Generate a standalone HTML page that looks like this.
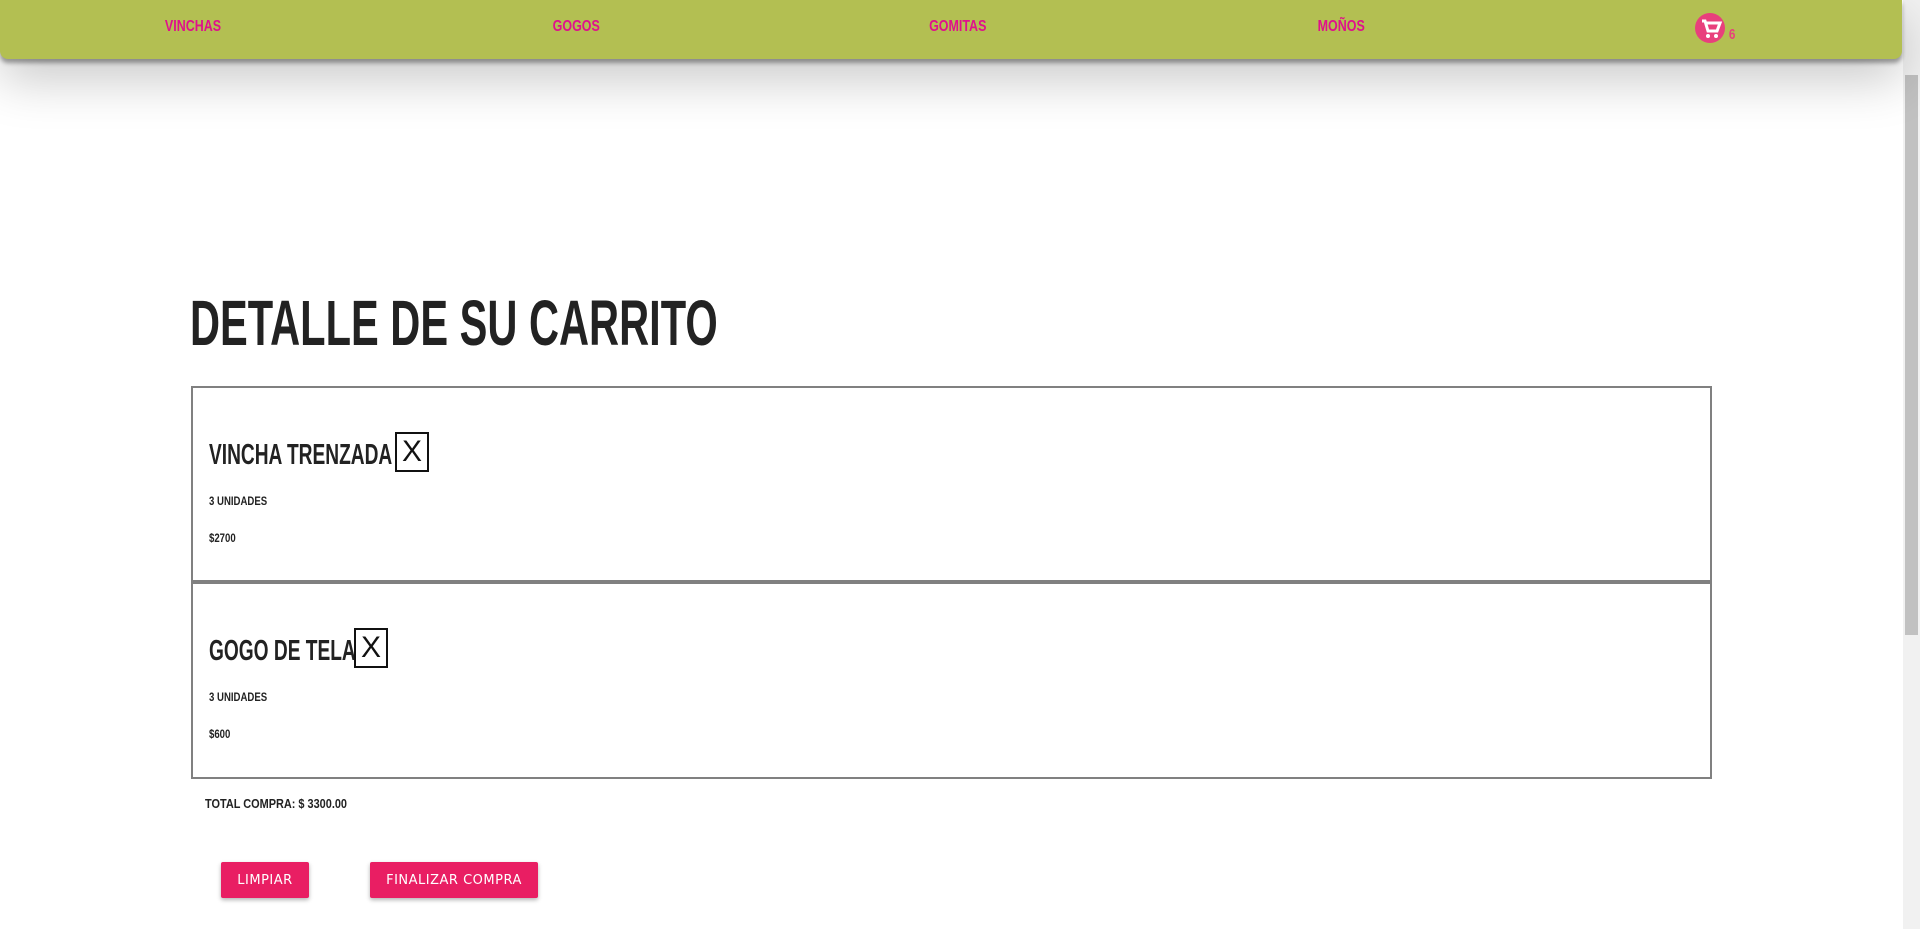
<!DOCTYPE html>
<html><head><meta charset="utf-8"><style>
body{margin:0;width:1920px;height:929px;overflow:hidden;background:#fff;font-family:"Liberation Sans",sans-serif;position:relative}
.nav{position:absolute;left:0;top:0;width:1902px;height:59px;background:#b3bf52;border-radius:0 0 8px 8px;box-shadow:0 4px 4px rgba(0,0,0,.35),0 20px 50px rgba(0,0,0,.22);z-index:2}
.nav div{position:absolute;top:0;width:200px;height:54px;display:flex;align-items:center;justify-content:center;color:#e0108c;font-weight:bold;font-size:16px}
.nav span{display:inline-block;transform:scaleX(.78)}
.cond{display:inline-block;transform-origin:left center;white-space:nowrap;font-weight:bold;color:#222}
.box{position:absolute;left:191px;width:1517px;border:2px solid #808080;height:192px}
.t{position:absolute;left:16px;font-size:29px}
.x{position:absolute;border:2px solid #111;font-family:"Liberation Sans",sans-serif;font-weight:normal;font-size:30px;display:flex;align-items:center;justify-content:center;color:#111;box-sizing:border-box}
.s{position:absolute;left:16px;font-size:12px}
.btn{position:absolute;top:862px;height:36px;background:#e91e63;color:#fff;letter-spacing:.5px;display:flex;align-items:center;justify-content:center;border-radius:2px;box-shadow:0 2px 4px rgba(0,0,0,.3);font-family:"DejaVu Sans",sans-serif;font-size:13px}
.sb{position:absolute;right:0;top:0;width:17px;height:929px;background:#f1f1f1}
.th{position:absolute;right:2px;top:75px;width:13px;height:560px;background:#c1c1c1}
</style></head><body>
<div class="nav">
<div style="left:93px"><span>VINCHAS</span></div>
<div style="left:476px"><span>GOGOS</span></div>
<div style="left:858px"><span>GOMITAS</span></div>
<div style="left:1241px"><span>MOÑOS</span></div>
<div style="left:1615px"><svg width="34" height="34" viewBox="0 0 34 34" style="margin-top:4px"><ellipse cx="16" cy="16" rx="15" ry="15" fill="#e8407c"/><path d="M8 9h3l3 10h9l3-8H12" fill="none" stroke="#fff" stroke-width="3"/><circle cx="14" cy="24" r="2" fill="#fff"/><circle cx="22" cy="24" r="2" fill="#fff"/></svg><span style="color:#e8407c;font-size:15px;margin-top:14px">6</span></div>
</div>
<div class="cond" style="position:absolute;left:190px;top:286px;font-size:64px;transform:scaleX(.65)">DETALLE DE SU CARRITO</div>
<div class="box" style="top:386px">
<div class="cond t" style="top:51px;transform:scaleX(.66)">VINCHA TRENZADA</div>
<div class="x" style="left:202px;top:44px;width:34px;height:40px">X</div>
<div class="cond s" style="top:106px;transform:scaleX(.8)">3 UNIDADES</div>
<div class="cond s" style="top:143px;transform:scaleX(.8)">$2700</div>
</div>
<div class="box" style="top:582px;height:193px">
<div class="cond t" style="top:51px;transform:scaleX(.66)">GOGO DE TELA</div>
<div class="x" style="left:161px;top:44px;width:34px;height:40px">X</div>
<div class="cond s" style="top:106px;transform:scaleX(.8)">3 UNIDADES</div>
<div class="cond s" style="top:143px;transform:scaleX(.8)">$600</div>
</div>
<div class="cond" style="position:absolute;left:205px;top:796px;font-size:13px;transform:scaleX(.84)">TOTAL COMPRA: $ 3300.00</div>
<div class="btn" style="left:221px;width:88px">LIMPIAR</div>
<div class="btn" style="left:370px;width:168px">FINALIZAR COMPRA</div>
<div class="sb"><div class="th"></div></div>
</body></html>
